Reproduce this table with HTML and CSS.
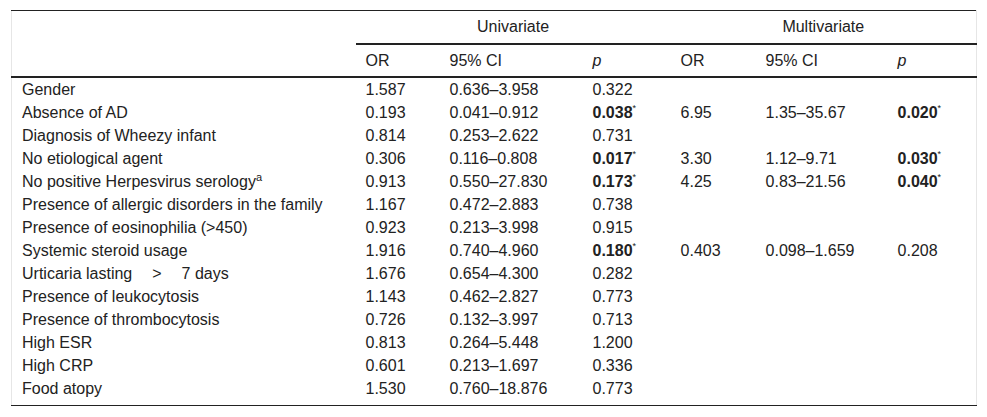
FILE: index.html
```html
<!DOCTYPE html>
<html>
<head>
<meta charset="utf-8">
<link rel="stylesheet" href="styles.css">
</head>
<body>
<div class="wrap">
<table class="tbl">
<colgroup>
<col class="c-label"><col class="c-or"><col class="c-ci"><col class="c-p"><col class="c-mor"><col class="c-mci"><col class="c-mp">
</colgroup>
<thead>
<tr class="h1">
<th></th>
<th colspan="3" class="grp">Univariate</th>
<th colspan="3" class="grp">Multivariate</th>
</tr>
<tr class="h2">
<th></th>
<th>OR</th><th>95% CI</th><th><i>p</i></th>
<th>OR</th><th>95% CI</th><th><i>p</i></th>
</tr>
</thead>
<tbody>
<tr><td>Gender</td><td>1.587</td><td>0.636–3.958</td><td>0.322</td><td></td><td></td><td></td></tr>
<tr><td>Absence of AD</td><td>0.193</td><td>0.041–0.912</td><td><b>0.038</b><sup>*</sup></td><td>6.95</td><td>1.35–35.67</td><td><b>0.020</b><sup>*</sup></td></tr>
<tr><td>Diagnosis of Wheezy infant</td><td>0.814</td><td>0.253–2.622</td><td>0.731</td><td></td><td></td><td></td></tr>
<tr><td>No etiological agent</td><td>0.306</td><td>0.116–0.808</td><td><b>0.017</b><sup>*</sup></td><td>3.30</td><td>1.12–9.71</td><td><b>0.030</b><sup>*</sup></td></tr>
<tr><td>No positive Herpesvirus serology<sup class="a">a</sup></td><td>0.913</td><td>0.550–27.830</td><td><b>0.173</b><sup>*</sup></td><td>4.25</td><td>0.83–21.56</td><td><b>0.040</b><sup>*</sup></td></tr>
<tr><td>Presence of allergic disorders in the family</td><td>1.167</td><td>0.472–2.883</td><td>0.738</td><td></td><td></td><td></td></tr>
<tr><td>Presence of eosinophilia (&gt;450)</td><td>0.923</td><td>0.213–3.998</td><td>0.915</td><td></td><td></td><td></td></tr>
<tr><td>Systemic steroid usage</td><td>1.916</td><td>0.740–4.960</td><td><b>0.180</b><sup>*</sup></td><td>0.403</td><td>0.098–1.659</td><td>0.208</td></tr>
<tr><td>Urticaria lasting<span class="gt">&gt;</span>7 days</td><td>1.676</td><td>0.654–4.300</td><td>0.282</td><td></td><td></td><td></td></tr>
<tr><td>Presence of leukocytosis</td><td>1.143</td><td>0.462–2.827</td><td>0.773</td><td></td><td></td><td></td></tr>
<tr><td>Presence of thrombocytosis</td><td>0.726</td><td>0.132–3.997</td><td>0.713</td><td></td><td></td><td></td></tr>
<tr><td>High ESR</td><td>0.813</td><td>0.264–5.448</td><td>1.200</td><td></td><td></td><td></td></tr>
<tr><td>High CRP</td><td>0.601</td><td>0.213–1.697</td><td>0.336</td><td></td><td></td><td></td></tr>
<tr class="last"><td>Food atopy</td><td>1.530</td><td>0.760–18.876</td><td>0.773</td><td></td><td></td><td></td></tr>
</tbody>
</table>
</div>
</body>
</html>
```
FILE: styles.css
```css
html, body {
  margin: 0;
  padding: 0;
  background: #fff;
}
.wrap {
  padding: 10px 11px 0 11px;
}
.tbl {
  width: 966px;
  table-layout: fixed;
  border-collapse: collapse;
  font-family: "Liberation Sans", Arial, sans-serif;
  font-size: 16px;
  color: #222;
  border-top: 1px solid #222;
  border-bottom: 1px solid #222;
  border-left: 1px solid #e6e6e6;
  border-right: 1px solid #e6e6e6;
}
.c-label { width: 344px; }
.c-or { width: 84px; }
.c-ci { width: 143px; }
.c-p { width: 88px; }
.c-mor { width: 85px; }
.c-mci { width: 132px; }
.c-mp { width: 89px; }
th, td {
  padding: 0 0 0 10px;
  text-align: left;
  font-weight: normal;
  white-space: nowrap;
  vertical-align: middle;
}
.h1 th {
  height: 32px;
}
.h1 th.grp {
  text-align: center;
  padding: 0;
  border-bottom: 2px solid #222;
}
.h2 th {
  height: 31px;
  border-bottom: 2px solid #222;
}
tbody td {
  height: 23px;
  line-height: 23px;
}
tbody tr.last td {
  height: 28px;
  vertical-align: top;
}
sup {
  font-size: 9px;
  line-height: 0;
  vertical-align: 7px;
}
sup.a {
  font-size: 11px;
  vertical-align: 6px;
}
.gt {
  padding: 0 20px;
}
```
